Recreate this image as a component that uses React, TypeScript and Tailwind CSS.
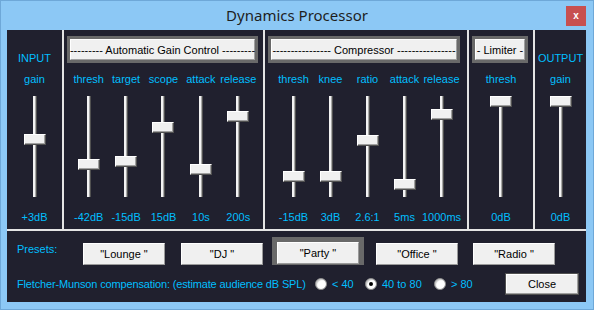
import React from "react";

const cyan = "text-[#00bfff]";

// thumb offset from top of track, in px
function Slider({ top }: { top: number }) {
  return (
    <div className="relative mt-[3px] h-[101px] w-[22px]">
      <div className="mx-auto h-full w-[4px] border-l-2 border-r border-l-[#f4f4f4] border-r-[#505050] bg-[#a8a8a8]" />
      <div
        className="absolute left-0 h-[11px] w-[22px] border border-t-white border-l-white border-r-[#505050] border-b-[#505050] bg-[#f0f0f0] shadow-[inset_-1px_-1px_0_#a0a0a0]"
        style={{ top }}
      />
    </div>
  );
}

function Channel({ label, value, top }: { label: string; value: string; top: number }) {
  return (
    <div className="flex flex-col items-center">
      <div className={`flex h-[28px] items-center ${cyan}`}>{label}</div>
      <Slider top={top} />
      <div className={`mt-[10px] flex h-[20px] items-center ${cyan}`}>{value}</div>
    </div>
  );
}

function FrameButton({ text, width }: { text: string; width: string }) {
  return (
    <div className={`ml-[3px] mt-[6px] h-[27px] bg-[#696969] p-[3px] ${width}`}>
      <div className="flex h-full items-center justify-center whitespace-nowrap border border-t-white border-l-white border-r-[#a0a0a0] border-b-[#a0a0a0] bg-[#f0f0f0] text-black">
        {text}
      </div>
    </div>
  );
}

function Sep() {
  return <div className="w-[2px] bg-[#e4e4e4]" />;
}

function PresetButton({ text, className = "" }: { text: string; className?: string }) {
  return (
    <div
      className={`flex h-[22px] w-[82px] items-center justify-center border border-t-white border-l-white border-r-[#9a9a9a] border-b-[#9a9a9a] bg-[#f0f0f0] text-black ${className}`}
    >
      {text}
    </div>
  );
}

function Radio({ label, checked, width }: { label: string; checked?: boolean; width: string }) {
  return (
    <div className={`flex items-center ${width}`}>
      <div className="flex h-[12px] w-[12px] items-center justify-center rounded-full border border-[#8a8a8a] bg-white shadow-[inset_1px_1px_1px_#c8c8c8]">
        {checked && <div className="h-[4px] w-[4px] rounded-full bg-black" />}
      </div>
      <span className={`ml-[5px] ${cyan}`}>{label}</span>
    </div>
  );
}

export default function App() {
  const agc = [
    { label: "thresh", value: "-42dB", top: 63 },
    { label: "target", value: "-15dB", top: 60 },
    { label: "scope", value: "15dB", top: 26 },
    { label: "attack", value: "10s", top: 68 },
    { label: "release", value: "200s", top: 15 },
  ];
  const comp = [
    { label: "thresh", value: "-15dB", top: 75 },
    { label: "knee", value: "3dB", top: 75 },
    { label: "ratio", value: "2.6:1", top: 39 },
    { label: "attack", value: "5ms", top: 83 },
    { label: "release", value: "1000ms", top: 13 },
  ];

  return (
    <div
      className="relative h-[310px] w-[594px] overflow-hidden border border-[#6ea8d8] bg-[#8cc8f5] text-[11px] leading-[14px]"
      style={{ fontFamily: '"Liberation Sans", Arial, sans-serif' }}
    >
      {/* title bar */}
      <div className="relative flex h-[29px] items-center justify-center">
        <span
          className="pb-[1px] text-[15px] text-[#1e1e1e]"
          style={{ fontFamily: '"Noto Sans", "Open Sans", sans-serif' }}
        >
          Dynamics Processor
        </span>
        <div className="absolute right-[7px] top-[5px] flex h-[20px] w-[20px] items-center justify-center bg-[#c75050] text-[10px] font-bold text-white">
          x
        </div>
      </div>

      {/* client area */}
      <div className="ml-[6px] flex h-[272px] w-[579px] flex-col bg-[#20202e]">
        <div className="flex h-[199px]">
          {/* input */}
          <div className="flex w-[55px] flex-col items-center">
            <div className={`flex h-[35px] items-end ${cyan}`}>INPUT</div>
            <Channel label="gain" value="+3dB" top={38} />
          </div>
          <Sep />
          {/* agc */}
          <div className="flex w-[199px] flex-col">
            <FrameButton text="--------- Automatic Gain Control ---------" width="w-[191px]" />
            <div className="mt-[2px] grid grid-cols-5 pl-[6px] pr-[6px]">
              {agc.map((c) => (
                <Channel key={c.label} {...c} />
              ))}
            </div>
          </div>
          <Sep />
          {/* compressor */}
          <div className="flex w-[202px] flex-col">
            <FrameButton text="---------------- Compressor ----------------" width="w-[192px]" />
            <div className="mt-[2px] grid grid-cols-5 pl-[10px] pr-[7px]">
              {comp.map((c) => (
                <Channel key={c.label} {...c} />
              ))}
            </div>
          </div>
          <Sep />
          {/* limiter */}
          <div className="flex w-[64px] flex-col">
            <FrameButton text="- Limiter -" width="w-[56px]" />
            <div className="mt-[2px] flex justify-center">
              <Channel label="thresh" value="0dB" top={0} />
            </div>
          </div>
          <Sep />
          {/* output */}
          <div className="flex w-[51px] flex-col items-center">
            <div className={`flex h-[35px] items-end ${cyan}`}>OUTPUT</div>
            <Channel label="gain" value="0dB" top={0} />
          </div>
        </div>

        <div className="h-[2px] bg-[#e4e4e4]" />

        {/* presets + compensation */}
        <div className="flex flex-col pl-[10px]">
          <div className="mt-[6px] flex h-[28px] items-start">
            <span className={`mt-[5px] w-[66px] ${cyan}`}>Presets:</span>
            <PresetButton text={'"Lounge "'} className="mt-[6px]" />
            <PresetButton text={'"DJ "'} className="ml-[16px] mt-[6px]" />
            <div className="ml-[9px] h-[28px] w-[92px] bg-[#696969] px-[5px] pt-[5px]">
              <PresetButton text={'"Party "'} className="h-[18px] w-[82px]" />
            </div>
            <PresetButton text={'"Office "'} className="ml-[12px] mt-[6px]" />
            <PresetButton text={'"Radio "'} className="ml-[15px] mt-[6px]" />
          </div>
          <div className="mt-[8px] flex h-[22px] items-center">
            <span className={`w-[298px] whitespace-nowrap tracking-[-0.15px] ${cyan}`}>
              Fletcher-Munson compensation: (estimate audience dB SPL)
            </span>
            <Radio label="< 40" width="w-[50px]" />
            <Radio label="40 to 80" checked width="w-[69px]" />
            <Radio label="> 80" width="w-[71px]" />
            <div className="flex h-[22px] w-[74px] items-center justify-center border border-[#505050] bg-[#f0f0f0] text-black shadow-[inset_-1px_-1px_0_#a0a0a0,inset_1px_1px_0_#ffffff]">
              Close
            </div>
          </div>
        </div>
      </div>
    </div>
  );
}
